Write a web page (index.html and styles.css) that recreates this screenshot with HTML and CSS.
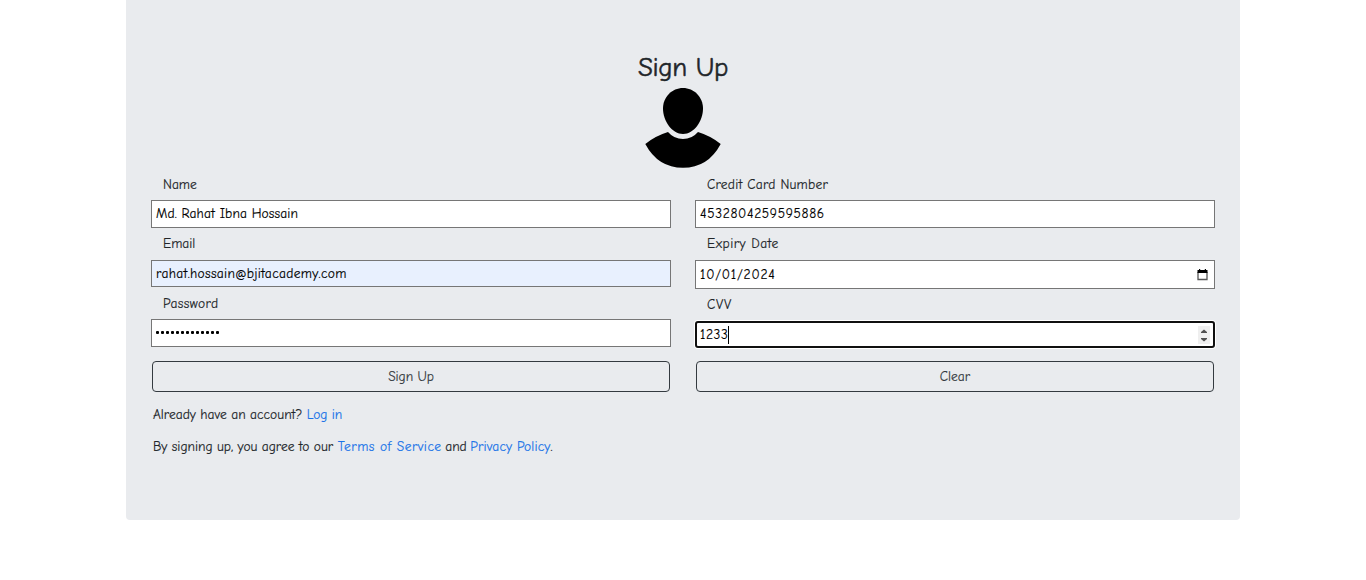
FILE: index.html
```html
<!DOCTYPE html>
<html lang="en">
<head>
<meta charset="utf-8">
<title>Sign Up</title>
<link rel="stylesheet" href="styles.css">
</head>
<body>
<main class="card">
  <h1 class="title"><span>Sign Up</span></h1>
  <svg class="avatar" viewBox="0 0 76 80" width="76" height="80">
    <path d="M38 0C49 0 58 9 58 20.500C58 33 49 46 38 46C27 46 18 33 18 20.500C18 9 27 0 38 0Z"/>
    <path d="M23 44Q29 51 38 51Q47 51 53 44Q66 48 75.700 56Q63 79.800 38 79.800Q13 79.800 .3 56Q10 48 23 44Z"/>
  </svg>
  <form class="columns">
    <div class="column">
      <label class="label label-low"><span class="t-name">Name</span></label>
      <div class="field"><span class="t-fullname">Md. Rahat Ibna Hossain</span></div>
      <label class="label"><span class="t-email">Email</span></label>
      <div class="field field-autofill"><span class="t-address">rahat.hossain@bjitacademy.com</span></div>
      <label class="label label-low"><span class="t-password">Password</span></label>
      <div class="field"><span class="dots"><i></i><i></i><i></i><i></i><i></i><i></i><i></i><i></i><i></i><i></i><i></i><i></i><i></i></span></div>
      <button class="button" type="button"><span class="t-submit">Sign Up</span></button>
    </div>
    <div class="column">
      <label class="label label-low"><span class="t-card">Credit Card Number</span></label>
      <div class="field"><span class="t-number">4532804259595886</span></div>
      <label class="label"><span class="t-expiry">Expiry Date</span></label>
      <div class="field field-date"><span class="t-date">10/01/2024</span>
        <svg class="calendar" viewBox="0 0 11 12" width="11" height="12"><path d="M1 3V10.500H10V3" fill="none" stroke="#555" stroke-width="1.300"/><path d="M.5 1H10.500V4H.5ZM2 0H3.200V2H2ZM7.800 0H9V2H7.800Z"/></svg>
      </div>
      <label class="label"><span class="t-cvv">CVV</span></label>
      <div class="field field-focus"><span class="t-code">1233</span><span class="caret"></span>
        <svg class="spinner" viewBox="0 0 12 18" width="12" height="18"><path fill="#efefef" d="M0 0H12V18H0Z"/><path fill="#505050" d="M3 7V6L6 3.500L9 6V7ZM3 12V13L6 15.500L9 13V12Z"/></svg>
      </div>
      <button class="button" type="button"><span class="t-clear">Clear</span></button>
    </div>
  </form>
  <p class="note"><span class="t-already">Already have an account?</span> <a class="t-login">Log in</a></p>
  <p class="note"><span class="t-agree">By signing up, you agree to our</span> <a class="t-terms">Terms of Service</a> <span class="t-and">and</span> <a class="t-privacy">Privacy Policy</a>.</p>
</main>
</body>
</html>
```

FILE: styles.css
```css
* { box-sizing: border-box; }
body { margin: 0; background: #fff; color: #212529; font: 13.5px/20px "Comic Sans MS", "Comic Neue", Lato, sans-serif; -webkit-text-stroke: .15px; }
.card { width: 1114px; height: 520px; margin: 0 auto; padding: 50px 25px 0; background: #e9ebee; border-radius: 0 0 4px 4px; }
.title { margin: 0; height: 38px; font-size: 27px; font-weight: 400; line-height: 36px; text-align: center; letter-spacing: -.3px; -webkit-text-stroke: .5px; }
.avatar { display: block; margin: 0 auto; }
.columns { display: grid; grid-template-columns: 520px 520px; column-gap: 24px; height: 224px; }
.column { display: flex; flex-direction: column; }
.label { height: 32px; padding: 6px 0 0 12px; white-space: nowrap; }
.label-low { padding-top: 7px; }
.field { display: flex; align-items: center; height: 28px; padding-left: 4px; border: 1px solid #767676; background: #fff; color: #000; }
.field-autofill { height: 27px; background: #e8f0fe; }
.field-date { height: 29px; justify-content: space-between; padding-right: 6px; }
.field-focus { height: 27px; border: 2px solid #101010; border-radius: 3px; padding: 0 3px; box-shadow: 0 0 0 1px #fff; }
.caret { width: 1px; height: 18px; background: #000; }
.spinner { margin-left: auto; }
.dots { display: flex; gap: 2px; padding-bottom: 2px; }
.dots i { width: 3px; height: 3px; border-radius: 1px; background: #000; }
.button { width: 518px; height: 31px; margin: auto 1px 0; padding: 0; border: 1px solid #343a40; border-radius: 4px; background: transparent; color: #343a40; font: inherit; }
.note { margin: 13px 0 0 2px; white-space: nowrap; }
.note + .note { margin-top: 12px; }
a { color: #1a73e8; }
.t-fullname { letter-spacing: .12px; }
.t-address { letter-spacing: .31px; }
.t-password { letter-spacing: .4px; }
.t-card { letter-spacing: .23px; }
.t-number { letter-spacing: .67px; }
.t-expiry { letter-spacing: .5px; }
.t-date { letter-spacing: .78px; }
.t-cvv { letter-spacing: .7px; }
.t-code { letter-spacing: .6px; }
.t-submit { letter-spacing: -.1px; }
.t-login { letter-spacing: -.1px; }
.t-agree { letter-spacing: -.04px; }
.t-terms { letter-spacing: .48px; }
.t-and { letter-spacing: -.1px; margin: 0 -.8px; }
.t-privacy { letter-spacing: .15px; }
```
